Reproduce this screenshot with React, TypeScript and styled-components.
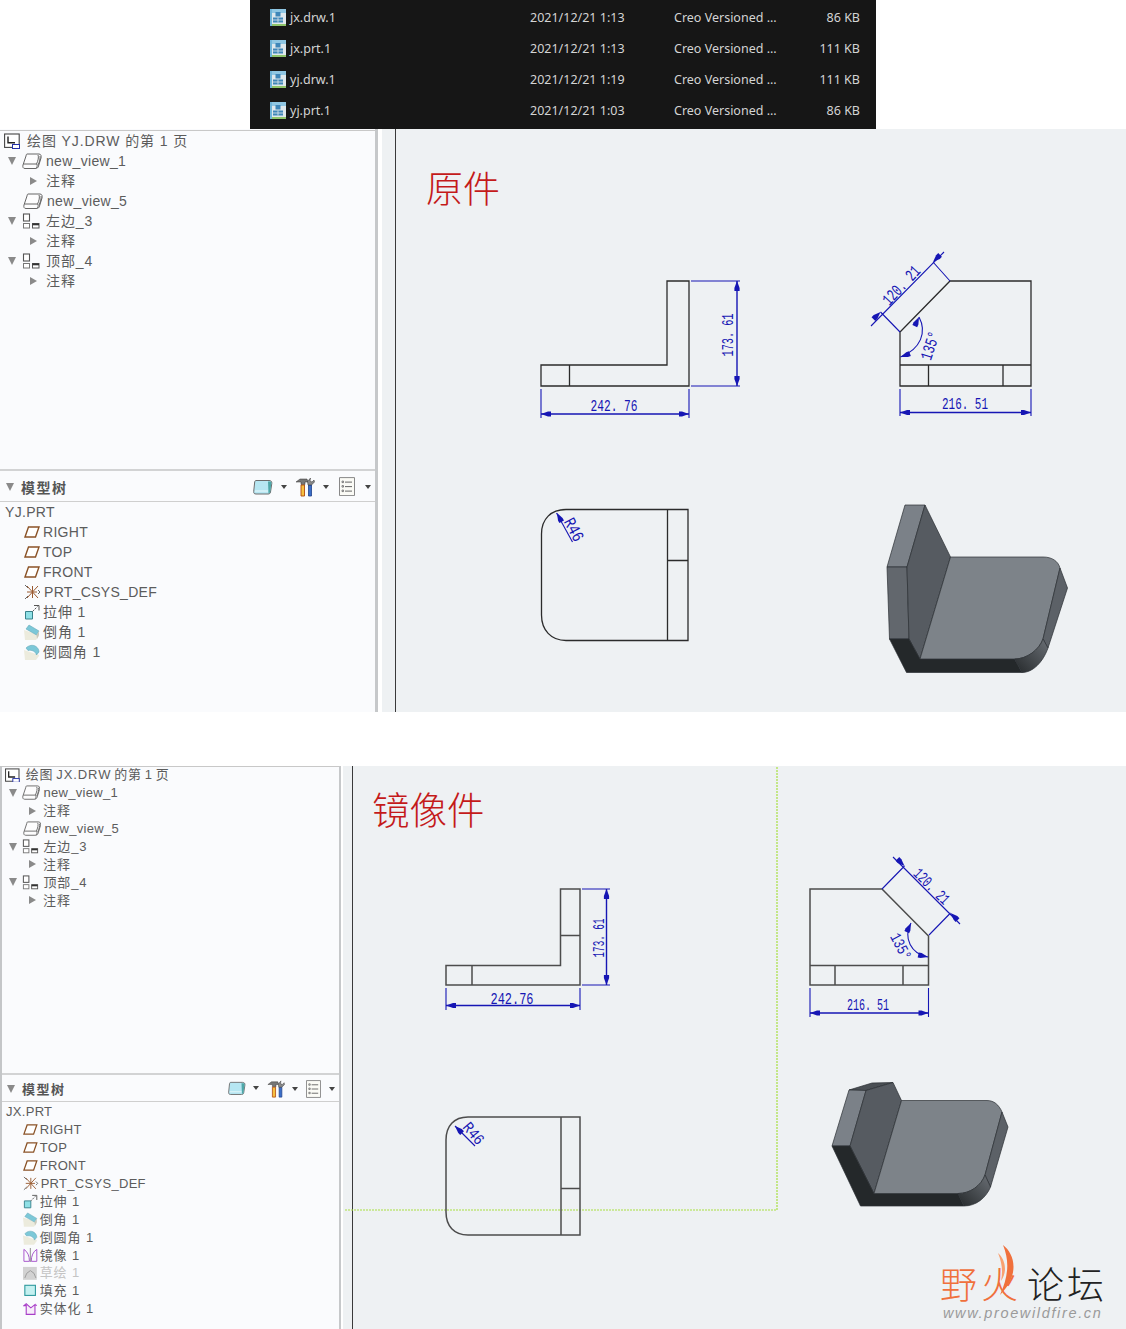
import React from 'react'
import styled, { createGlobalStyle } from 'styled-components'

const SANS = '"Liberation Sans", "Noto Sans CJK SC", sans-serif'
const BLUE = '#1616b4'

const GlobalStyle = createGlobalStyle`
  html, body {
    margin: 0;
    padding: 0;
    background: #fff;
    overflow: hidden;
  }
`

const Page = styled.div`
  width: 1126px;
  height: 1329px;
  position: relative;
  font-family: ${SANS};
`

/* ---------- file list ---------- */

const TopStrip = styled.div`
  height: 129px;
  padding-left: 250px;
`

const FilePanel = styled.div`
  width: 626px;
  height: 129px;
  box-sizing: border-box;
  padding: 2px 16px 0 20px;
  background: #161616;
  color: #d4d4d4;
  font-family: "Noto Sans", "Noto Sans CJK SC", sans-serif;
  font-size: 12.5px;
`

const FileRow = styled.div`
  height: 31px;
  display: grid;
  grid-template-columns: 260px 144px 136px 50px;
  align-items: center;
`

const FileName = styled.div`
  display: flex;
  align-items: center;
  gap: 4px;
`

const FileSize = styled.div`
  text-align: right;
`

const FileIcon = () => (
  <svg width="16" height="17" viewBox="0 0 16 17">
    <rect x="0" y="0" width="16" height="17" fill="#dfe8ec" />
    <rect x="0" y="0" width="16" height="4" fill="#8fc6e2" />
    <path d="M0 0h2v17H0z" fill="#6fb4d8" />
    <path d="M2 15h14v2H2z" fill="#8fc46a" />
    <rect x="5.5" y="3" width="5" height="4.5" fill="#3f86b8" />
    <rect x="3" y="8.5" width="10" height="5" fill="#3f86b8" />
    <path d="M8 8.5v5M3 11h10" stroke="#dfe8ec" strokeWidth="0.8" />
  </svg>
)

const files = [
  ['jx.drw.1', '2021/12/21 1:13', '86 KB'],
  ['jx.prt.1', '2021/12/21 1:13', '111 KB'],
  ['yj.drw.1', '2021/12/21 1:19', '111 KB'],
  ['yj.prt.1', '2021/12/21 1:03', '86 KB'],
]

/* ---------- workspace shell ---------- */

const Workspace = styled.section<{ $height: number; $gapTop?: number }>`
  display: flex;
  height: ${(p) => p.$height}px;
  margin-top: ${(p) => p.$gapTop || 0}px;
`

const Sidebar = styled.div<{ $width: number; $edge?: boolean; $font: number }>`
  width: ${(p) => p.$width}px;
  flex: none;
  box-sizing: border-box;
  display: flex;
  flex-direction: column;
  background: #fafbfd;
  color: #5c5c5c;
  font-size: ${(p) => p.$font}px;
  border-left: ${(p) => (p.$edge ? '2px solid #c4c6c8' : 'none')};
`

const DrawingTree = styled.div<{ $height: number; $top: number; $inset: number }>`
  height: ${(p) => p.$height}px;
  flex: none;
  box-sizing: border-box;
  margin-top: ${(p) => p.$top}px;
  padding-top: ${(p) => p.$inset}px;
  box-shadow: inset 0 1px 0 #c8c8c8;
`

const PanelHeader = styled.div<{ $height: number; $pad: number; $iconGap: number }>`
  height: ${(p) => p.$height}px;
  flex: none;
  box-sizing: border-box;
  display: flex;
  align-items: center;
  padding: 1px ${(p) => p.$iconGap}px 0 ${(p) => p.$pad}px;
  border-top: 2px solid #d2d3d4;
  border-bottom: 1px solid #cfcfcf;
`

const PanelTitle = styled.span`
  margin-left: 7px;
  font-weight: 700;
  color: #555;
  flex: 1;
  letter-spacing: 1.5px;
`

const ToolGroup = styled.div`
  display: flex;
  align-items: center;
  gap: 8px;
`

const Tool = styled.div<{ $gap: number; $lead?: number }>`
  display: flex;
  align-items: center;
  gap: ${(p) => p.$gap}px;
  margin-left: ${(p) => p.$lead || 0}px;
`

const Caret = styled.span`
  width: 0;
  height: 0;
  border-left: 3px solid transparent;
  border-right: 3px solid transparent;
  border-top: 4px solid #444;
`

const ModelTree = styled.div<{ $inset: number }>`
  flex: 1;
  padding-top: ${(p) => p.$inset}px;
`

const Row = styled.div<{ $height: number; $left: number }>`
  height: ${(p) => p.$height}px;
  display: flex;
  align-items: center;
  padding-left: ${(p) => p.$left}px;
  white-space: nowrap;
`

const OpenTwist = styled.span<{ $after: number }>`
  width: 0;
  height: 0;
  margin-right: ${(p) => p.$after}px;
  border-left: 4.5px solid transparent;
  border-right: 4.5px solid transparent;
  border-top: 8px solid #8a8a8a;
`

const ClosedTwist = styled.span<{ $after: number }>`
  width: 0;
  height: 0;
  margin-right: ${(p) => p.$after}px;
  border-top: 4.5px solid transparent;
  border-bottom: 4.5px solid transparent;
  border-left: 7px solid #8a8a8a;
`

const Label = styled.span<{ $before: number; $muted?: boolean; $cjk: boolean; $word: number }>`
  margin-left: ${(p) => p.$before}px;
  padding-bottom: ${(p) => (p.$cjk ? 2 : 0)}px;
  letter-spacing: ${(p) => (p.$cjk ? 0.9 : 0.3)}px;
  word-spacing: ${(p) => p.$word}px;
  color: ${(p) => (p.$muted ? '#c4c4c4' : 'inherit')};
`

const Sash = styled.div<{ $width: number; $clear: number }>`
  width: ${(p) => p.$width}px;
  margin-right: ${(p) => p.$clear}px;
  flex: none;
  background: #c6c8ca;
`

const Gutter = styled.div<{ $width: number }>`
  width: ${(p) => p.$width}px;
  flex: none;
  background: #eef1f3;
`

const Canvas = styled.div<{ $pad: string }>`
  flex: 1;
  position: relative;
  box-sizing: border-box;
  padding: ${(p) => p.$pad};
  background: #eef1f3;
  border-left: 1px solid #3a3a3a;
`

const Sheet = styled.svg`
  position: absolute;
  left: 0;
  top: 0;
  overflow: visible;
`

const Heading = styled.h2<{ $size: number }>`
  position: relative;
  margin: 0;
  color: #c41a1a;
  font-family: "Noto Sans CJK SC", sans-serif;
  font-size: ${(p) => p.$size}px;
  font-weight: 300;
  line-height: 1;
`

/* ---------- tree icons ---------- */

const IconBox = styled.svg`
  flex: none;
  display: block;
`

type IconName =
  | 'root' | 'view' | 'layout' | 'plane' | 'csys' | 'extrude'
  | 'chamfer' | 'round' | 'mirror' | 'sketch' | 'fill' | 'solid'

const glyphs: Record<IconName, { w: number; h: number; art: React.ReactNode }> = {
  root: {
    w: 16, h: 16,
    art: (
      <>
        <rect x="0.6" y="1" width="14.6" height="13.4" fill="#fff" stroke="#444" strokeWidth="1.1" />
        <path d="M4 3.5v6.3h7" fill="none" stroke="#222" strokeWidth="1.4" />
        <rect x="8.5" y="11.5" width="7" height="4" fill="#fff" stroke="#2431a8" strokeWidth="1" />
      </>
    ),
  },
  view: {
    w: 20, h: 16,
    art: (
      <g fill="none" stroke="#666" strokeWidth="1">
        <path d="M5 1H17C19 1 19.5 3 19 5L16.5 13C16 15 15 15.5 13 15.5H3C1 15.5 0.5 14 1 12L4 3C4.3 1.7 4.5 1 5 1Z" fill="#fdfdfe" />
        <path d="M1.5 11H14C15.5 11 15.5 13 14.5 15M16 2C17 4 16 8 14.5 11M18 3C18.5 5 17.5 9 16 12" />
      </g>
    ),
  },
  layout: {
    w: 20, h: 16,
    art: (
      <>
        <rect x="1.5" y="1" width="6" height="7" fill="#fff" stroke="#555" strokeWidth="1.1" />
        <rect x="1.5" y="10.5" width="6" height="4.5" fill="#fff" stroke="#777" strokeWidth="1" />
        <rect x="10.5" y="10.5" width="6.5" height="4.5" fill="#fff" stroke="#555" strokeWidth="1" />
        <rect x="10.5" y="10.5" width="6.5" height="1.8" fill="#333" />
      </>
    ),
  },
  plane: {
    w: 16, h: 12,
    art: <path d="M1 11L4.5 1H15l-3.5 10z" fill="#fff" stroke="#8a5226" strokeWidth="1.4" />,
  },
  csys: {
    w: 17, h: 16,
    art: (
      <g fill="none" strokeWidth="1">
        <path d="M3 2l11 12M14 2L3 14M3 8h10" stroke="#9a5a30" />
        <path d="M8.5 2v12" stroke="#9a5a30" />
        <path d="M1 1l3 3M1 15l3-3M14 6l2 2-2 2" stroke="#666" />
      </g>
    ),
  },
  extrude: {
    w: 16, h: 16,
    art: (
      <>
        <path d="M1.5 7.5h7V15h-7z" fill="#8fe0e6" stroke="#38828c" />
        <path d="M8.5 7.5l5-5" stroke="#555" strokeDasharray="2 1" />
        <path d="M10 1.5h5v5" fill="none" stroke="#555" />
      </>
    ),
  },
  chamfer: {
    w: 16, h: 16,
    art: (
      <>
        <path d="M0 6l9 3 6 2v1l-3 4H1z" fill="#ecebdd" />
        <path d="M5 1l10 6-2.5 4L2 5z" fill="#7cc8d8" stroke="#5aa0b0" strokeWidth="0.5" />
        <path d="M12.5 11l2.5-4v4l-2 4z" fill="#c9c9bd" />
      </>
    ),
  },
  round: {
    w: 16, h: 16,
    art: (
      <>
        <path d="M0 6l9 3 6 2v1l-3 4H1z" fill="#ecebdd" />
        <path d="M2 4c3-3 7-3.500 10-1.500 2 1.400 3 3.500 3 5.500l-2.500 3C12 8 8 5.500 4 6.500z" fill="#7cc8d8" stroke="#5aa0b0" strokeWidth="0.5" />
      </>
    ),
  },
  mirror: {
    w: 16, h: 16,
    art: (
      <g fill="none" strokeWidth="1">
        <path d="M1 1.5v13h6c0-6-2-10.5-6-13zM15 1.5v13H9c0-6 2-10.5 6-13z" stroke="#a24cc8" />
        <path d="M8 0v16" stroke="#999" strokeWidth="1.2" />
      </g>
    ),
  },
  sketch: {
    w: 16, h: 16,
    art: (
      <>
        <rect width="15" height="14" y="1" fill="#d2d2d2" />
        <path d="M2 13l2-5 4-3 4 3 2 5" fill="none" stroke="#9a9a9a" />
      </>
    ),
  },
  fill: {
    w: 16, h: 16,
    art: <rect x="2" y="2.5" width="11.5" height="11" fill="#c4f0f0" stroke="#2f9a9e" strokeWidth="1.2" />,
  },
  solid: {
    w: 16, h: 16,
    art: (
      <g fill="#f7ecfa" stroke="#a83ec8" strokeWidth="1.2">
        <path d="M3.5 5v9.5H13V4L8.5 7.5 3.5 3 1 5z" />
        <path d="M13 4l2 1" />
      </g>
    ),
  },
}

const TreeIcon = ({ name, scale }: { name: IconName; scale: number }) => {
  const g = glyphs[name]
  return (
    <IconBox width={g.w * scale} height={g.h * scale} viewBox={`0 0 ${g.w} ${g.h}`}>
      {g.art}
    </IconBox>
  )
}

const CubeTool = ({ w }: { w: number }) => (
  <svg width={w} height={w * 0.8} viewBox="0 0 20 16">
    <path d="M3 1.5h13c2 0 3 1 2.8 3L17.5 13c-.2 1.5-1 2-2.5 2H3c-1.8 0-2.5-1-2.3-2.5L1.7 3C1.900 2 2.300 1.5 3 1.5z" fill="#b6e6f2" stroke="#6c6c6c" />
    <path d="M15 2.5h2.5l1 1-1.400 10-1.600 1z" fill="#4ea7a8" />
    <path d="M2 12h13" stroke="#e9f8fb" />
  </svg>
)

const ToolsTool = ({ w }: { w: number }) => (
  <svg width={w} height={w} viewBox="0 0 20 20">
    <path d="M1 5l4-3h7l1 3H10v2.5H6V5z" fill="#777" stroke="#333" strokeWidth="0.5" />
    <path d="M6 8h3.5v11H6z" fill="#f6c040" stroke="#b04a10" strokeWidth="0.9" />
    <path d="M13.5 8h3v11h-3z" fill="#3a6ec8" stroke="#20408a" strokeWidth="0.8" />
    <path d="M13 8l-.5-3.5L15.5 1 15 4l2 1 2-2 .5 2-3 3z" fill="#888" stroke="#333" strokeWidth="0.5" />
  </svg>
)

const ListTool = ({ w }: { w: number }) => (
  <svg width={w} height={w * 1.2} viewBox="0 0 16 19">
    <path d="M.5.5h15v18H.5z" fill="#fbfbf6" stroke="#888" />
    <path d="M6 5h7M6 9.5h7M6 14h7" stroke="#666" />
    <path d="M3 4h1.5v1.5H3zM3 8.500h1.5V10H3zM3 13h1.5v1.5H3z" fill="#fff" stroke="#555" strokeWidth="0.7" />
  </svg>
)

/* ---------- tree data ---------- */

type TreeItem = {
  kind: 'sheet' | 'open' | 'leaf' | 'note' | 'text' | 'feature'
  icon?: IconName
  label: string
  muted?: boolean
}

const drawingItems = (name: string): TreeItem[] => [
  { kind: 'sheet', icon: 'root', label: `绘图 ${name}.DRW 的第 1 页` },
  { kind: 'open', icon: 'view', label: 'new_view_1' },
  { kind: 'note', label: '注释' },
  { kind: 'leaf', icon: 'view', label: 'new_view_5' },
  { kind: 'open', icon: 'layout', label: '左边_3' },
  { kind: 'note', label: '注释' },
  { kind: 'open', icon: 'layout', label: '顶部_4' },
  { kind: 'note', label: '注释' },
]

const featureItems: TreeItem[] = [
  { kind: 'feature', icon: 'plane', label: 'RIGHT' },
  { kind: 'feature', icon: 'plane', label: 'TOP' },
  { kind: 'feature', icon: 'plane', label: 'FRONT' },
  { kind: 'feature', icon: 'csys', label: 'PRT_CSYS_DEF' },
  { kind: 'feature', icon: 'extrude', label: '拉伸 1' },
  { kind: 'feature', icon: 'chamfer', label: '倒角 1' },
  { kind: 'feature', icon: 'round', label: '倒圆角 1' },
]

const mirrorItems: TreeItem[] = [
  { kind: 'feature', icon: 'mirror', label: '镜像 1' },
  { kind: 'feature', icon: 'sketch', label: '草绘 1', muted: true },
  { kind: 'feature', icon: 'fill', label: '填充 1' },
  { kind: 'feature', icon: 'solid', label: '实体化 1' },
]

type Metrics = {
  row: number
  scale: number
  left: Record<TreeItem['kind'], number>
  twistAfter: number
  noteAfter: number
  sheetGap: number
  sheetWord: number
  iconGap: number
  featureGap: number
}

const TreeRow = ({ item, m }: { item: TreeItem; m: Metrics }) => (
  <Row $height={m.row} $left={m.left[item.kind]}>
    {item.kind === 'open' && <OpenTwist $after={m.twistAfter} />}
    {item.kind === 'note' && <ClosedTwist $after={m.noteAfter} />}
    {item.icon && <TreeIcon name={item.icon} scale={m.scale} />}
    <Label
      $before={item.kind === 'sheet' ? m.sheetGap : item.kind === 'feature' ? m.featureGap : item.icon ? m.iconGap : 0}
      $muted={item.muted}
      $cjk={/[\u4e00-\u9fff]/.test(item.label)}
      $word={item.kind === 'sheet' ? m.sheetWord : 0}
    >
      {item.label}
    </Label>
  </Row>
)

/* ---------- drawing primitives ---------- */

const Arrow = ({ x, y, a }: { x: number; y: number; a: number }) => (
  <polygon points="0,0 -7,-2.6 -10,-2.6 -10,2.6 -7,2.6" fill={BLUE} transform={`translate(${x} ${y}) rotate(${a})`} />
)

const DimText = ({ x, y, a = 0, w, size = 17, children }: { x: number; y: number; a?: number; w: number; size?: number; children: string }) => (
  <text
    transform={`translate(${x} ${y}) rotate(${a})`}
    textAnchor="middle"
    dominantBaseline="middle"
    fontFamily={'"Liberation Mono", monospace'}
    fontSize={size}
    fill={BLUE}
    textLength={w}
    lengthAdjust="spacingAndGlyphs"
  >
    {children}
  </text>
)

const Thin = styled.path`
  fill: none;
  stroke: ${BLUE};
  stroke-width: 1.1;
`

const DimLine = styled.path`
  fill: none;
  stroke: ${BLUE};
  stroke-width: 1.4;
`

const OriginalSheet = () => (
  <Sheet width="730" height="583" viewBox="396 129 730 583">
    <g fill="none" stroke="#2b2b2b" strokeWidth="1.3">
      <path d="M541 365H667V281H689V386H541ZM569.5 365V386" />
      <path d="M950 281H1031V386H900V332ZM900 365H1031M928.5 365V386M1003 365V386" />
      <path d="M566 509.5H688V640.5H566C551 640.5 541.5 630 541.5 615V534C541.5 519 551 509.5 566 509.5ZM667.5 509.5V640.5M667.5 560.5H688" />
    </g>

    <Thin d="M541 389V418M689 389V418M691 281H740M691 386H740" />
    <DimLine d="M541 414H689M737 281V386" />
    <Arrow x={541} y={414} a={180} />
    <Arrow x={689} y={414} a={0} />
    <Arrow x={737} y={281} a={-90} />
    <Arrow x={737} y={386} a={90} />
    <DimText x={614} y={407} w={47}>242. 76</DimText>
    <DimText x={729} y={335} a={-90} w={43}>173. 61</DimText>

    <Thin d="M950 281L933 262M900 332L880.5 312M871 326L944 252" />
    <Arrow x={933} y={262} a={135} />
    <Arrow x={880.5} y={312} a={-45} />
    <DimText x={902} y={286} a={-47} w={47}>120. 21</DimText>

    <Thin d="M919 317C927 332 921 349 900.5 357" />
    <Arrow x={919} y={317} a={-65} />
    <Arrow x={900.5} y={357} a={160} />
    <DimText x={931} y={346} a={-72} w={29}>135°</DimText>

    <Thin d="M900 389V416M1031 389V416" />
    <DimLine d="M900 412.5H1031" />
    <Arrow x={900} y={412.5} a={180} />
    <Arrow x={1031} y={412.5} a={0} />
    <DimText x={965} y={405} w={46}>216. 51</DimText>

    <Thin d="M556.5 513L572.5 542" />
    <Arrow x={557} y={513} a={-118} />
    <DimText x={573} y={530} a={62} w={24}>R46</DimText>

    <defs>
      <linearGradient id="edgeA" x1="0" y1="1" x2="1" y2="0">
        <stop offset="0" stopColor="#25292b" />
        <stop offset="1" stopColor="#6a6f75" />
      </linearGradient>
    </defs>
    <g stroke="#2b2f33" strokeWidth="0.7">
      <path d="M905 505H925L907 567H887Z" fill="#7b8188" />
      <path d="M887 567H907L909 639H889.5Z" fill="#62676d" />
      <path d="M925 505L950.5 557L920 659L909 639L907 567Z" fill="#565b61" />
      <path d="M889.5 639H909L920 659H1014.5L1022 672.5H906.5Z" fill="#24282a" />
      <path d="M950.5 557H1043C1052 557 1058 561 1060 568L1043 639C1039 650 1027 659 1014.5 659H920Z" fill="#7d8389" />
      <path d="M1060 568L1067.5 588L1048 648L1043 639Z" fill="#5c6167" />
      <path d="M1043 639L1048 648C1043 662 1033 672.5 1022 672.5L1014.5 659C1027 659 1039 650 1043 639Z" fill="url(#edgeA)" />
    </g>
  </Sheet>
)

const MirrorSheet = () => (
  <Sheet width="773" height="563" viewBox="353 766 773 563">
    <path d="M345 1210H777V766" fill="none" stroke="#a8e040" strokeWidth="1.2" strokeDasharray="2 1" />

    <g fill="none" stroke="#4c4c4c" strokeWidth="1.5">
      <path d="M446 965.5H560.5V889H580V985H446ZM472 965.5V985M560.5 935.5H580" />
      <path d="M810 889H882L928.5 936V985H810ZM810 965.5H928.5M835 965.5V985M903 965.5V985" />
      <path d="M468 1117H580V1235H468C454 1235 446 1226 446 1212V1140C446 1126 454 1117 468 1117ZM561 1117V1235M561 1188.5H580" />
    </g>

    <Thin d="M446 988V1010M580 988V1010M582 889H610M582 985H610" />
    <DimLine d="M446 1005.5H580M606.5 889V985" />
    <Arrow x={446} y={1005.5} a={180} />
    <Arrow x={580} y={1005.5} a={0} />
    <Arrow x={606.5} y={889} a={-90} />
    <Arrow x={606.5} y={985} a={90} />
    <DimText x={512} y={1000} w={43} size={16}>242.76</DimText>
    <DimText x={600} y={938} a={-90} w={39} size={16}>173. 61</DimText>

    <Thin d="M882 889L904.5 866M929 935L950.5 913M893 857L960 924" />
    <Arrow x={904.5} y={866} a={45} />
    <Arrow x={950.5} y={913} a={-135} />
    <DimText x={931} y={887} a={45} w={44} size={16}>120. 21</DimText>

    <Thin d="M911 923C903 938 911 954 928 957" />
    <Arrow x={911} y={923} a={-65} />
    <Arrow x={928} y={957} a={12} />
    <DimText x={900} y={947} a={62} w={28} size={16}>135°</DimText>

    <Thin d="M810 988V1017M928.5 988V1017" />
    <DimLine d="M810 1013H928.5" />
    <Arrow x={810} y={1013} a={180} />
    <Arrow x={928.5} y={1013} a={0} />
    <DimText x={868} y={1006} w={42} size={16}>216. 51</DimText>

    <Thin d="M455 1126L475 1146" />
    <Arrow x={455} y={1126} a={-135} />
    <DimText x={473} y={1134} a={50} w={24} size={16}>R46</DimText>

    <defs>
      <linearGradient id="edgeB" x1="0" y1="1" x2="1" y2="0">
        <stop offset="0" stopColor="#25292b" />
        <stop offset="1" stopColor="#6a6f75" />
      </linearGradient>
    </defs>
    <g stroke="#2b2f33" strokeWidth="0.7">
      <path d="M849 1090L872 1083L893 1082.5L866 1090.5Z" fill="#4a4f54" />
      <path d="M849 1090L866 1090.5L850 1146H832Z" fill="#7b8188" />
      <path d="M866 1090.5L893 1082.5L901.5 1100.5L874 1193.5L850 1146Z" fill="#565b61" />
      <path d="M832 1146H850L874 1193.5H958L964 1206H860.5Z" fill="#24282a" />
      <path d="M901.5 1100.5H987C994 1100.5 999 1105 1002 1112L985 1175C981 1186 970 1193.5 958 1193.5H874Z" fill="#7d8389" />
      <path d="M1002 1112L1008 1127L990.5 1187L985 1175Z" fill="#5c6167" />
      <path d="M985 1175L990.5 1187C986 1198 976 1206 964 1206L958 1193.5C970 1193.5 981 1186 985 1175Z" fill="url(#edgeB)" />
    </g>
  </Sheet>
)

/* ---------- watermark ---------- */

const Watermark = styled.div`
  position: absolute;
  right: 19px;
  bottom: 8px;
  width: 167px;
  font-family: "Noto Sans CJK SC", sans-serif;
`

const Flame = styled.svg`
  position: absolute;
  left: 55px;
  top: -20px;
`

const BrandLine = styled.div`
  display: flex;
  font-size: 37px;
  font-weight: 300;
  line-height: 36px;
  margin-bottom: 4px;
  white-space: nowrap;
`

const BrandHot = styled.span`
  flex: none;
  color: #f0703c;
  width: 87px;
  letter-spacing: 4px;
`

const BrandDark = styled.span`
  flex: none;
  color: #222;
  letter-spacing: 3px;
`

const BrandUrl = styled.div`
  font-family: "Liberation Sans", sans-serif;
  font-size: 14.5px;
  font-style: italic;
  color: #9a9a9a;
  letter-spacing: 1.65px;
  line-height: 16px;
  margin-left: 3px;
  white-space: nowrap;
`

/* ---------- page ---------- */

const upper: Metrics = {
  row: 20, scale: 1,
  left: { sheet: 4, open: 8, leaf: 23, note: 30, text: 5, feature: 24 },
  twistAfter: 6, noteAfter: 9, sheetGap: 7, sheetWord: 0, iconGap: 4, featureGap: 3,
}

const lower: Metrics = {
  row: 17.9, scale: 0.92,
  left: { sheet: 3, open: 7, leaf: 21, note: 27, text: 4, feature: 21 },
  twistAfter: 5, noteAfter: 7, sheetGap: 6, sheetWord: -1.7, iconGap: 3, featureGap: 2,
}

const App = () => (
  <Page>
    <GlobalStyle />
    <TopStrip>
      <FilePanel>
        {files.map(([name, date, size]) => (
          <FileRow key={name}>
            <FileName>
              <FileIcon />
              {name}
            </FileName>
            <div>{date}</div>
            <div>Creo Versioned ...</div>
            <FileSize>{size}</FileSize>
          </FileRow>
        ))}
      </FilePanel>
    </TopStrip>

    <Workspace $height={583}>
      <Sidebar $width={375} $font={14}>
        <DrawingTree $height={339} $top={1} $inset={1}>
          {drawingItems('YJ').map((item, i) => (
            <TreeRow key={i} item={item} m={upper} />
          ))}
        </DrawingTree>
        <PanelHeader $height={33} $pad={6} $iconGap={4}>
          <OpenTwist $after={0} />
          <PanelTitle>模型树</PanelTitle>
          <ToolGroup>
            <Tool $gap={8}><CubeTool w={20} /><Caret /></Tool>
            <Tool $gap={8}><ToolsTool w={20} /><Caret /></Tool>
            <Tool $gap={10} $lead={2}><ListTool w={16} /><Caret /></Tool>
          </ToolGroup>
        </PanelHeader>
        <ModelTree $inset={0}>
          <TreeRow item={{ kind: 'text', label: 'YJ.PRT' }} m={upper} />
          {featureItems.map((item) => (
            <TreeRow key={item.label} item={item} m={upper} />
          ))}
        </ModelTree>
      </Sidebar>
      <Sash $width={3} $clear={4} />
      <Gutter $width={13} />
      <Canvas $pad="40px 0 0 30px">
        <OriginalSheet />
        <Heading $size={37}>原件</Heading>
      </Canvas>
    </Workspace>

    <Workspace $height={563} $gapTop={54}>
      <Sidebar $width={339} $edge $font={13}>
        <DrawingTree $height={307} $top={0} $inset={0}>
          {drawingItems('JX').map((item, i) => (
            <TreeRow key={i} item={item} m={lower} />
          ))}
        </DrawingTree>
        <PanelHeader $height={29} $pad={5} $iconGap={4}>
          <OpenTwist $after={0} />
          <PanelTitle>模型树</PanelTitle>
          <ToolGroup>
            <Tool $gap={7}><CubeTool w={18} /><Caret /></Tool>
            <Tool $gap={7}><ToolsTool w={18} /><Caret /></Tool>
            <Tool $gap={8}><ListTool w={15} /><Caret /></Tool>
          </ToolGroup>
        </PanelHeader>
        <ModelTree $inset={1}>
          <TreeRow item={{ kind: 'text', label: 'JX.PRT' }} m={lower} />
          {[...featureItems, ...mirrorItems].map((item) => (
            <TreeRow key={item.label} item={item} m={lower} />
          ))}
        </ModelTree>
      </Sidebar>
      <Sash $width={2} $clear={2} />
      <Gutter $width={9} />
      <Canvas $pad="23px 0 0 19px">
        <MirrorSheet />
        <Heading $size={37.5}>镜像件</Heading>
      </Canvas>
    </Workspace>

    <Watermark>
      <Flame width="24" height="52" viewBox="0 0 24 52">
        <path d="M8 0C20 9 25 30 5 50C13 32 15 17 8 0Z" fill="#f0703c" />
        <path d="M3 8C10 14 13 26 6 36C8 26 7 18 3 8Z" fill="#f9a070" />
      </Flame>
      <BrandLine>
        <BrandHot>野火</BrandHot>
        <BrandDark>论坛</BrandDark>
      </BrandLine>
      <BrandUrl>www.proewildfire.cn</BrandUrl>
    </Watermark>
  </Page>
)

export default App
